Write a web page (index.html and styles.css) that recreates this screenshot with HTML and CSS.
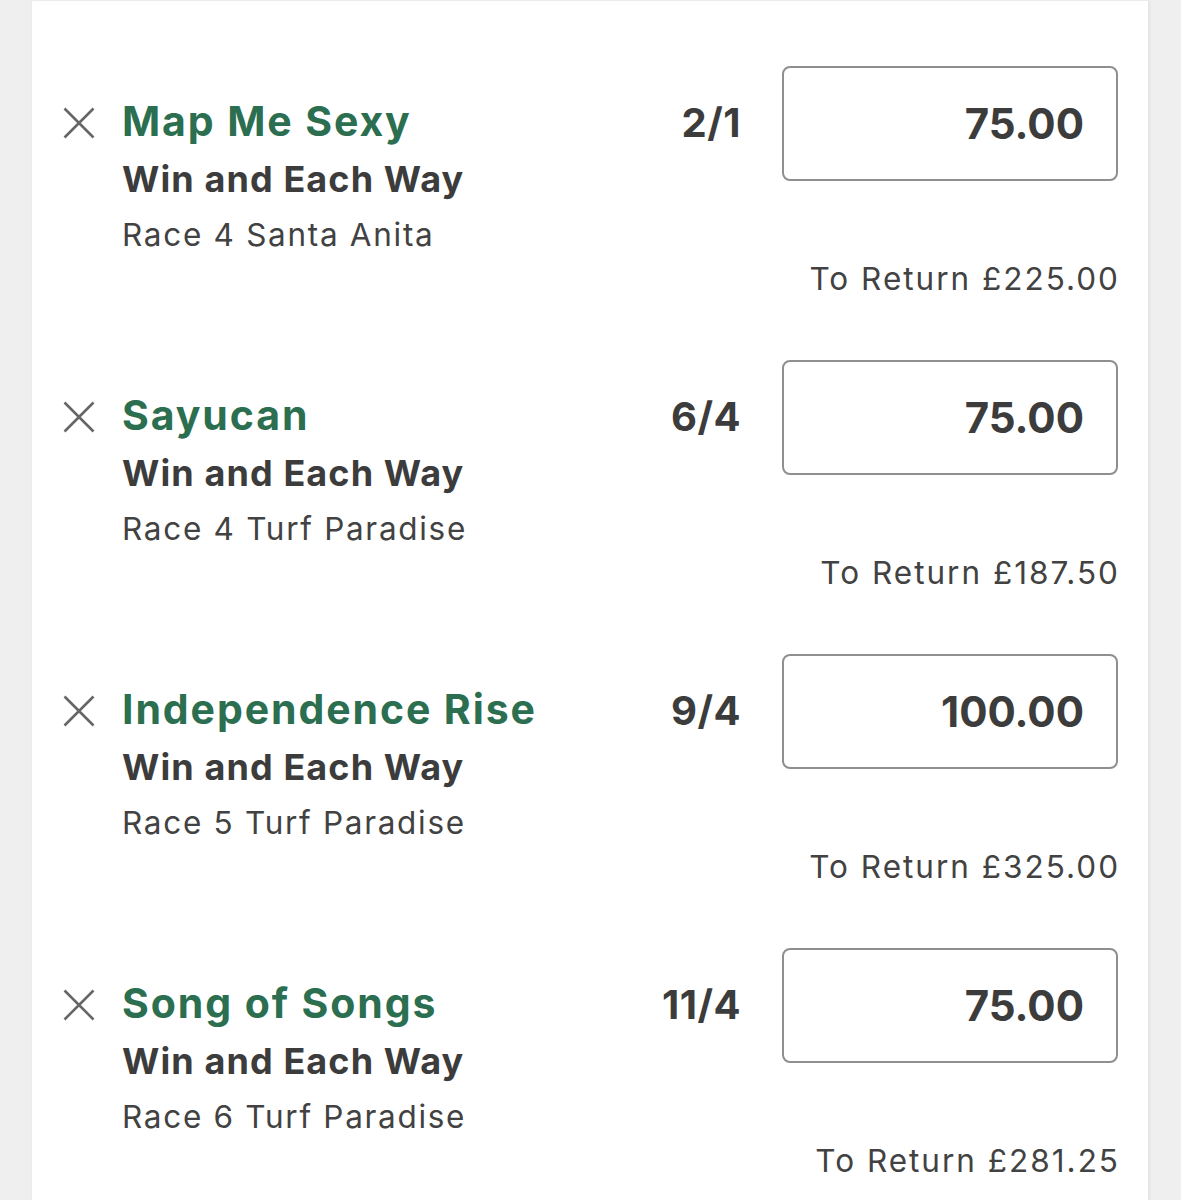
FILE: index.html
```html
<!DOCTYPE html>
<html lang="en">
<head>
<meta charset="utf-8">
<title>Bet Slip</title>
<link rel="stylesheet" href="styles.css">
</head>
<body>
<div class="page">
  <div class="card">
    <div class="bet">
      <button class="remove" aria-label="Remove"><svg viewBox="0 0 32 32"><path d="M1.5 1.5 L30.5 30.5 M30.5 1.5 L1.5 30.5"/></svg></button>
      <div class="info">
        <div class="title">Map Me Sexy</div>
        <div class="market">Win and Each Way</div>
        <div class="meta">Race 4 Santa Anita</div>
      </div>
      <div class="odds">2/1</div>
      <div class="stake">75.00</div>
      <div class="return">To Return £225.00</div>
    </div>
    <div class="bet">
      <button class="remove" aria-label="Remove"><svg viewBox="0 0 32 32"><path d="M1.5 1.5 L30.5 30.5 M30.5 1.5 L1.5 30.5"/></svg></button>
      <div class="info">
        <div class="title">Sayucan</div>
        <div class="market">Win and Each Way</div>
        <div class="meta">Race 4 Turf Paradise</div>
      </div>
      <div class="odds">6/4</div>
      <div class="stake">75.00</div>
      <div class="return">To Return £187.50</div>
    </div>
    <div class="bet">
      <button class="remove" aria-label="Remove"><svg viewBox="0 0 32 32"><path d="M1.5 1.5 L30.5 30.5 M30.5 1.5 L1.5 30.5"/></svg></button>
      <div class="info">
        <div class="title">Independence Rise</div>
        <div class="market">Win and Each Way</div>
        <div class="meta">Race 5 Turf Paradise</div>
      </div>
      <div class="odds">9/4</div>
      <div class="stake">100.00</div>
      <div class="return">To Return £325.00</div>
    </div>
    <div class="bet">
      <button class="remove" aria-label="Remove"><svg viewBox="0 0 32 32"><path d="M1.5 1.5 L30.5 30.5 M30.5 1.5 L1.5 30.5"/></svg></button>
      <div class="info">
        <div class="title">Song of Songs</div>
        <div class="market">Win and Each Way</div>
        <div class="meta">Race 6 Turf Paradise</div>
      </div>
      <div class="odds">11/4</div>
      <div class="stake">75.00</div>
      <div class="return">To Return £281.25</div>
    </div>
  </div>
</div>
</body>
</html>
```
FILE: styles.css
```css
html, body {
  margin: 0;
  padding: 0;
  background: #efefef;
}

body {
  font-family: Inter, Roboto, "Liberation Sans", sans-serif;
  color: #3c3c3c;
}

.page {
  padding-top: 1px;
  height: 1199px;
  overflow: hidden;
}

.card {
  margin-left: 32px;
  width: 1118px;
  min-height: 1300px;
  background: #ffffff;
  box-sizing: border-box;
  padding: 65px 30px 0 31px;
  border-right: 2px solid #e6e6e6;
  box-shadow: 0 0 2px rgba(0, 0, 0, 0.06);
  display: flex;
  flex-direction: column;
  gap: 61px;
}

.bet {
  display: grid;
  grid-template-columns: 32px 1fr auto 336px;
  grid-template-rows: 115px auto;
}

.remove {
  grid-column: 1;
  grid-row: 1;
  width: 32px;
  height: 32px;
  margin: 41px 0 0 0;
  padding: 0;
  border: 0;
  background: none;
}

.remove svg {
  display: block;
  width: 32px;
  height: 32px;
  fill: none;
  stroke: #666666;
  stroke-width: 2.6;
}

.info {
  grid-column: 2;
  grid-row: 1 / 3;
  margin-left: 27px;
  margin-top: 27px;
}

.title {
  font-size: 41px;
  font-weight: 700;
  line-height: 56px;
  color: #2b6e50;
  letter-spacing: 1.9px;
}

.market {
  font-size: 36px;
  font-weight: 700;
  line-height: 60px;
  color: #3c3c3c;
  letter-spacing: 1.1px;
}

.meta {
  font-size: 31.5px;
  font-weight: 400;
  line-height: 52px;
  color: #424242;
  letter-spacing: 1.7px;
}

.odds {
  grid-column: 3;
  grid-row: 1;
  font-size: 40px;
  font-weight: 700;
  line-height: 113px;
  margin-right: 41px;
  color: #3c3c3c;
  text-align: right;
  letter-spacing: 0.5px;
}

.stake {
  grid-column: 4;
  grid-row: 1;
  height: 115px;
  box-sizing: border-box;
  border: 2px solid #8f8f8f;
  border-radius: 8px;
  padding-right: 32px;
  text-align: right;
  font-size: 42px;
  font-weight: 700;
  line-height: 111px;
  color: #3c3c3c;
  letter-spacing: 0;
}

.return {
  grid-column: 3 / 5;
  grid-row: 2;
  justify-self: end;
  margin-top: 78px;
  margin-right: -2px;
  font-size: 31.5px;
  line-height: 40px;
  font-weight: 400;
  color: #424242;
  letter-spacing: 2px;
}
```
